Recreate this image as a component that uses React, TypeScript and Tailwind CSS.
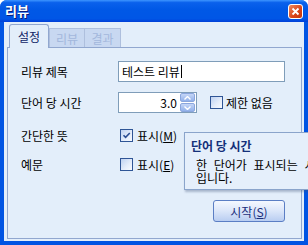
import React from 'react'

const font = "font-['Noto_Sans_CJK_KR','Noto_Sans',sans-serif]"

function CheckBox({ checked }: { checked?: boolean }) {
  return (
    <span className="relative block size-[13px] shrink-0 border border-[#2f5596] bg-[linear-gradient(135deg,#bfd2f1_0%,#e6eefb_60%,#f7faff_100%)]">
      {checked && (
        <svg className="absolute inset-0" width="11" height="11" viewBox="0 0 11 11">
          <path d="M2.5 5.2 L4.6 7.4 L8.8 3" fill="none" stroke="#2a4d93" strokeWidth="1.6" />
        </svg>
      )}
    </span>
  )
}

function Spin() {
  return (
    <div className="flex flex-col gap-px w-[15px] h-[19px] mr-px">
      {[0, 1].map((i) => (
        <div
          key={i}
          className="flex-1 grid place-items-center rounded-[2px] border border-[#8aa6dd] bg-[linear-gradient(to_bottom,#c5d6f7,#92b1ea)]"
        >
          <svg width="7" height="4" viewBox="0 0 7 4">
            <path d={i === 0 ? 'M0.5 3.5 L3.5 0.5 L6.5 3.5' : 'M0.5 0.5 L3.5 3.5 L6.5 0.5'} fill="none" stroke="#ffffff" strokeWidth="1.4" />
          </svg>
        </div>
      ))}
    </div>
  )
}

export default function App() {
  return (
    <div className={`relative w-[308px] h-[245px] overflow-hidden text-[12px] leading-[13px] text-black ${font}`}>
      <div className="flex flex-col h-full rounded-t-[7px] bg-[#0054e3]">
        <div className="h-[22px] shrink-0 flex items-center justify-between pl-[5px] pr-[5px] rounded-t-[7px] bg-[linear-gradient(to_bottom,#3d95ff_0%,#0a61ec_12%,#0058e6_45%,#0056e6_85%,#003fd8_100%)]">
          <span className="text-white font-bold text-[13px] leading-[14px] [text-shadow:1px_1px_0_#0a1c7a]">리뷰</span>
          <span className="grid place-items-center size-[15px] rounded-[3px] border border-white bg-[linear-gradient(135deg,#f08a5e,#d94317_60%,#c0380f)]">
            <svg width="9" height="9" viewBox="0 0 9 9">
              <path d="M1.5 1.5 L7.5 7.5 M7.5 1.5 L1.5 7.5" stroke="#ffffff" strokeWidth="1.8" />
            </svg>
          </span>
        </div>

        <div className="flex-1 mx-[4px] mb-[4px] flex flex-col bg-[#e3eefa] pl-[3px] pr-[2px] pt-[2px] pb-[2px]">
          <div className="h-[23px] shrink-0 flex items-end pl-[2px]">
            <div className="relative z-10 -mb-px h-[24px] w-[40px] flex items-center justify-center rounded-t-[3px] border border-b-0 border-[#91a7cf] bg-[#e3eefa] text-[#0f2466]">
              설정
            </div>
            <div className="h-[19px] w-[36px] flex items-center justify-center border border-b-0 border-[#aebfdd] bg-[#c8d8f1] text-[#a3b7dc]">
              리뷰
            </div>
            <div className="h-[19px] w-[36px] flex items-center justify-center border border-b-0 border-l-0 border-[#aebfdd] bg-[#c8d8f1] text-[#a3b7dc]">
              결과
            </div>
          </div>

          <div className="flex-1 flex flex-col border border-[#91a7cf] pl-[13px] pr-[16px] pt-[13px]">
            <div className="h-[21px] flex items-center">
              <span className="w-[97px] shrink-0">리뷰 제목</span>
              <div className="flex-1 h-[21px] flex items-center border border-[#7f9db9] bg-white pl-[3px]">
                테스트 리뷰<span className="ml-px w-px h-[13px] bg-black" />
              </div>
            </div>

            <div className="mt-[10px] h-[21px] flex items-center">
              <span className="w-[97px] shrink-0">단어 당 시간</span>
              <div className="w-[79px] h-[21px] flex items-center justify-end gap-[3px] border border-[#7f9db9] bg-white">
                <span>3.0</span>
                <Spin />
              </div>
              <div className="ml-[13px] flex items-center gap-[3px]">
                <CheckBox />
                <span>제한 없음</span>
              </div>
            </div>

            <div className="mt-[12px] h-[21px] flex items-center">
              <span className="w-[97px] shrink-0">간단한 뜻</span>
              <div className="ml-[2px] flex items-center gap-[4px]">
                <CheckBox checked />
                <span>
                  표시(<u>M</u>)
                </span>
              </div>
            </div>

            <div className="mt-[8px] h-[21px] flex items-center">
              <span className="w-[97px] shrink-0">예문</span>
              <div className="ml-[2px] flex items-center gap-[4px]">
                <CheckBox />
                <span>
                  표시(<u>E</u>)
                </span>
              </div>
            </div>

            <div className="mt-[25px] flex justify-end">
              <button className="w-[72px] h-[22px] rounded-[3px] border border-[#5b7ec4] bg-[linear-gradient(to_bottom,#f4f8ff,#dbe6f9_50%,#b9cdf1)] text-[#1b2f7c]">
                시작(<u>S</u>)
              </button>
            </div>
          </div>
        </div>
      </div>

      <div className="absolute left-[184px] top-[132px] w-[160px] h-[58px] border border-[#8aa4cb] bg-[#e5effb] pl-[6px] pt-[6px] shadow-[1px_2px_2px_rgba(60,80,120,0.35)]">
        <div className="font-bold text-[#14307a] whitespace-nowrap">단어 당 시간</div>
        <div className="mt-[6px] ml-[5px] flex flex-col">
          <span className="whitespace-nowrap [word-spacing:4px]">한 단어가 표시되는 시간</span>
          <span className="whitespace-nowrap">입니다.</span>
        </div>
      </div>
    </div>
  )
}
